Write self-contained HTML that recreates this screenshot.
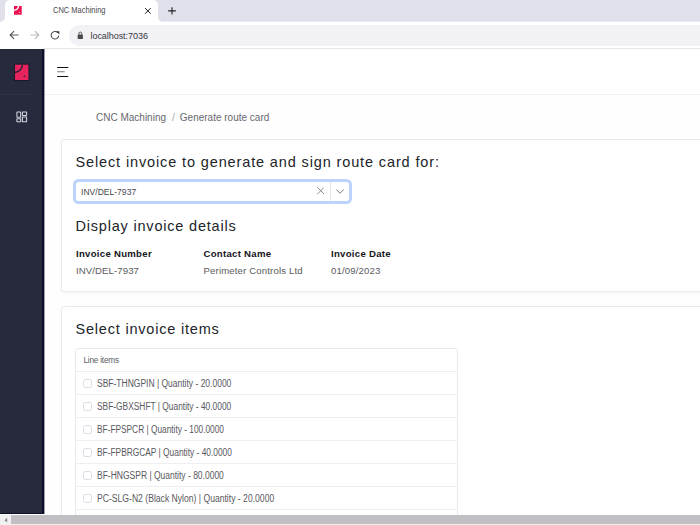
<!DOCTYPE html>
<html><head><meta charset="utf-8">
<style>
*{box-sizing:border-box;margin:0;padding:0}
html,body{width:700px;height:525px;overflow:hidden;background:#fff;font-family:"Liberation Sans",sans-serif}
.abs{position:absolute}
#tabstrip{left:0;top:0;width:700px;height:22px;background:#dfe0e9;border-bottom:1px solid #e9e9f0}
#tab{left:5px;top:0;width:153px;height:22px;background:#fff;border-radius:5px 5px 0 0}
.inv{width:5px;height:5px;top:17px;background:#fff}
.inv:after{content:"";position:absolute;left:0;top:0;width:5px;height:5px;background:#dfe0e9}
#invL:after{border-bottom-right-radius:5px}
#invR:after{border-bottom-left-radius:5px}
#tabtitle{left:53px;top:4px;font-size:8.4px;transform:scaleX(0.895);transform-origin:0 0;color:#48484c;white-space:nowrap;line-height:12px}
#toolbar{left:0;top:22px;width:700px;height:26px;background:#fff}
#omni{left:69px;top:24.5px;width:660px;height:21.5px;border-radius:11px;background:#f2f1f6}
#url{left:90.5px;top:29.6px;font-size:9px;color:#38383d;line-height:12px;white-space:nowrap;letter-spacing:-0.05px}
#tbline{left:44px;top:48px;width:656px;height:1px;background:#e6e5ea}
#sidebar{left:0;top:49px;width:44px;height:465px;background:#272a3d;border-right:2px solid #0d0e2a;border-bottom:1px solid #0d0e2a}
#sbline{left:0;top:94px;width:34px;height:1px;background:#2d3144}
#header{left:44px;top:49px;width:656px;height:45.5px;background:#fff;border-bottom:1px solid #f0eff4}
#page{left:44px;top:95px;width:656px;height:420px;background:#fefeff}
.card{background:#fff;border:1px solid #eae9ee;border-radius:3.5px;box-shadow:0 1px 3px rgba(20,20,60,0.05)}
#card1{left:61px;top:139px;width:700px;height:153px}
#card2{left:61px;top:306px;width:700px;height:260px}
.h{font-size:14.5px;letter-spacing:0.8px;color:#212529;white-space:nowrap;line-height:20px}
#crumb{left:96px;top:112.3px;font-size:10px;color:#68686d;white-space:nowrap;line-height:12px}
#crumb .sl{color:#a5a5aa;margin:0 5px 0 6px}
#sel{left:72.5px;top:179px;width:279.5px;height:24.7px;border-radius:5.5px;background:#fff;border:3px solid #bcd3fb}
#selval{left:80.7px;top:185.5px;font-size:9.9px;transform:scaleX(0.866);transform-origin:0 0;color:#48484d;line-height:12px;white-space:nowrap}
.lbl{font-size:9.6px;letter-spacing:0.28px;font-weight:700;color:#15151a;white-space:nowrap;line-height:12px}
.val{font-size:9.6px;letter-spacing:0.15px;color:#5a5a60;white-space:nowrap;line-height:12px}
#items{left:75px;top:348px;width:383px;height:200px;border:1px solid #e9e8ed;border-radius:4px;background:#fff}
.row{left:75px;width:383px;height:1px;background:#eeedf1}
.cb{left:83.2px;width:9.3px;height:8.8px;border:1px solid #d9dce5;border-radius:2.5px;background:#fff}
.rt{left:97.2px;font-size:20px;color:#58585e;white-space:nowrap;line-height:24px;transform-origin:0 0}
#scroll{left:0;top:514.5px;width:700px;height:10.5px;background:#f1f1f1}
#thumb{left:11px;top:515px;width:689px;height:8.5px;background:#c1bfc3}
</style></head><body>
<div id="tabstrip" class="abs"></div>
<div id="invL" class="abs inv" style="left:0"></div>
<div id="tab" class="abs"></div>
<div id="invR" class="abs inv" style="left:158px"></div>
<!-- favicon -->
<svg class="abs" style="left:14px;top:6px" width="8" height="9" viewBox="0 0 8 9">
 <rect x="0" y="0" width="7.7" height="8.7" fill="#e8104f"/>
 <path d="M-0.2 4.3A4.5 4.3 0 0 0 4.5 -0.2" stroke="#fff" stroke-width="1.3" fill="none"/>
 <circle cx="5.4" cy="6.6" r="0.5" fill="#fff"/>
</svg>
<div id="tabtitle" class="abs">CNC Machining</div>
<svg class="abs" style="left:144px;top:7px" width="8" height="8" viewBox="0 0 8 8"><path d="M1.1 1.1L6.7 6.7M6.7 1.1L1.1 6.7" stroke="#222" stroke-width="1"/></svg>
<svg class="abs" style="left:168px;top:7px" width="8" height="8" viewBox="0 0 8 8"><path d="M4 0.2V7.6M0.2 3.9H7.8" stroke="#222" stroke-width="1.1"/></svg>
<div id="toolbar" class="abs"></div>
<!-- nav icons -->
<svg class="abs" style="left:9px;top:30px" width="10" height="10" viewBox="0 0 10 10"><path d="M9.5 5H1.5M5 1.2L1.2 5L5 8.8" stroke="#5a5a5e" stroke-width="1.2" fill="none"/></svg>
<svg class="abs" style="left:29.5px;top:30px" width="10" height="10" viewBox="0 0 10 10"><path d="M0.5 5H8.5M5 1.2L8.8 5L5 8.8" stroke="#b9b9bd" stroke-width="1.2" fill="none"/></svg>
<svg class="abs" style="left:50px;top:31px" width="10" height="9" viewBox="0 0 10 9"><path d="M8.7 4.6A3.75 3.75 0 1 1 7.6 1.6" stroke="#4a4a4e" stroke-width="1.05" fill="none"/><path d="M6.1 0.3H9.3V3.5Z" fill="#333"/></svg>
<div id="omni" class="abs"></div>
<svg class="abs" style="left:77px;top:31px" width="7" height="8" viewBox="0 0 7 8"><path d="M1.9 3.6V2.5A1.4 1.4 0 0 1 4.7 2.5V3.6" stroke="#4a4a4e" stroke-width="0.95" fill="none"/><rect x="0.7" y="3.4" width="5.2" height="4.5" rx="0.5" fill="#4a4a4e"/></svg>
<div id="url" class="abs">localhost:7036</div>
<div id="tbline" class="abs"></div>

<div id="sidebar" class="abs"></div>
<div id="sbline" class="abs"></div>
<!-- logo -->
<svg class="abs" style="left:13px;top:63px" width="18" height="19" viewBox="0 0 18 19">
 <rect x="1.5" y="1.2" width="14.4" height="16.3" fill="none" stroke="#161a2b" stroke-width="1"/>
 <rect x="2" y="1.7" width="13.4" height="15.3" fill="#e8245f"/>
 <path d="M2 9.3A7.6 7.6 0 0 0 9.4 1.7" stroke="#1a1e31" stroke-width="1.2" fill="none"/>
 <circle cx="11.5" cy="13.3" r="0.8" fill="#1a1e31"/>
</svg>
<!-- dashboard icon -->
<svg class="abs" style="left:16px;top:110.5px" width="12" height="12" viewBox="0 0 12 12" fill="none" stroke="#d3d6e0" stroke-width="1.05">
 <rect x="0.9" y="0.9" width="3.8" height="5.4" rx="0.4"/>
 <rect x="6.4" y="0.9" width="4.2" height="3.5" rx="0.4"/>
 <rect x="0.9" y="7.7" width="3.8" height="3.1" rx="0.4"/>
 <rect x="6.4" y="5.9" width="4.2" height="4.9" rx="0.4"/>
</svg>

<div id="header" class="abs"></div>
<svg class="abs" style="left:56px;top:66px" width="14" height="12" viewBox="0 0 14 12">
 <path d="M1.1 1.5H12.3M1.1 10.5H12.3" stroke="#111" stroke-width="1.2"/>
 <path d="M1.1 5.7H8.7" stroke="#8e8e8e" stroke-width="1.2"/>
</svg>
<div id="page" class="abs"></div>
<div class="abs" style="left:44px;top:49px;width:1px;height:465px;background:#9c9ca8"></div>
<div id="crumb" class="abs">CNC Machining<span class="sl">/</span>Generate route card</div>

<div id="card1" class="abs card"></div>
<div class="abs h" style="left:75.5px;top:152px;letter-spacing:0.87px">Select invoice to generate and sign route card for:</div>
<div id="sel" class="abs"></div>
<div id="selval" class="abs">INV/DEL-7937</div>
<svg class="abs" style="left:316.8px;top:187px" width="7.5" height="7.5" viewBox="0 0 7.5 7.5"><path d="M0.4 0.4L7.1 7.1M7.1 0.4L0.4 7.1" stroke="#808086" stroke-width="0.9"/></svg>
<div class="abs" style="left:330px;top:182px;width:1px;height:18.5px;background:#e6e6ea"></div>
<svg class="abs" style="left:335.8px;top:188.5px" width="9" height="6" viewBox="0 0 9 6"><path d="M0.4 0.6L4.1 4.2L7.8 0.6" stroke="#77777d" stroke-width="0.95" fill="none"/></svg>
<div class="abs h" style="left:75.5px;top:216px">Display invoice details</div>
<div class="abs lbl" style="left:76px;top:248px">Invoice Number</div>
<div class="abs lbl" style="left:203.5px;top:248px">Contact Name</div>
<div class="abs lbl" style="left:331px;top:248px">Invoice Date</div>
<div class="abs val" style="left:76px;top:265px;letter-spacing:0.1px">INV/DEL-7937</div>
<div class="abs val" style="left:203.5px;top:265px">Perimeter Controls Ltd</div>
<div class="abs val" style="left:331px;top:265px">01/09/2023</div>

<div id="card2" class="abs card"></div>
<div class="abs h" style="left:75.5px;top:319.2px">Select invoice items</div>
<div id="items" class="abs"></div>
<div class="abs" style="left:83.5px;top:355.2px;font-size:8.3px;letter-spacing:-0.25px;color:#5e5e64;line-height:10px;white-space:nowrap">Line items</div>
<div class="abs row" style="top:371px"></div>
<div class="abs row" style="top:394px"></div>
<div class="abs row" style="top:417px"></div>
<div class="abs row" style="top:440px"></div>
<div class="abs row" style="top:463px"></div>
<div class="abs row" style="top:486px"></div>
<div class="abs row" style="top:509px"></div>
<div class="abs cb" style="top:379px"></div>
<div class="abs cb" style="top:402px"></div>
<div class="abs cb" style="top:425px"></div>
<div class="abs cb" style="top:448px"></div>
<div class="abs cb" style="top:471px"></div>
<div class="abs cb" style="top:494px"></div>
<div class="abs rt" style="top:377.0px;transform:scale(0.4245,0.5)">SBF-THNGPIN | Quantity - 20.0000</div>
<div class="abs rt" style="top:400.0px;transform:scale(0.4188,0.5)">SBF-GBXSHFT | Quantity - 40.0000</div>
<div class="abs rt" style="top:423.0px;transform:scale(0.4159,0.5)">BF-FPSPCR | Quantity - 100.0000</div>
<div class="abs rt" style="top:446.0px;transform:scale(0.4178,0.5)">BF-FPBRGCAP | Quantity - 40.0000</div>
<div class="abs rt" style="top:469.0px;transform:scale(0.4247,0.5)">BF-HNGSPR | Quantity - 80.0000</div>
<div class="abs rt" style="top:492.0px;transform:scale(0.4301,0.5)">PC-SLG-N2 (Black Nylon) | Quantity - 20.0000</div>

<div id="scroll" class="abs"></div>
<div id="thumb" class="abs"></div>
<svg class="abs" style="left:2.5px;top:516.5px" width="6" height="7" viewBox="0 0 6 7"><path d="M4.2 0.8V5.6L1.4 3.2Z" fill="#8a8a8e"/></svg>
</body></html>
